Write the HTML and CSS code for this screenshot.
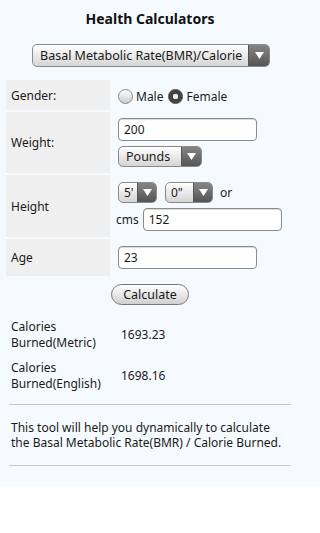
FILE: index.html
```html
<!DOCTYPE html>
<html>
<head>
<meta charset="utf-8">
<link rel="stylesheet" href="styles.css">
</head>
<body>
<div class="page">
 <div class="content">
  <h1 class="title">Health Calculators</h1>
  <div class="select select-main">
    <span class="select-text">Basal Metabolic Rate(BMR)/Calorie</span>
    <span class="select-arrow"><svg width="9" height="7" viewBox="0 0 9 7"><path d="M0 0H9L4.5 7Z" fill="#fff"/></svg></span>
  </div>

  <div class="form">
    <div class="row row-gender">
      <div class="label">Gender:</div>
      <div class="field radios">
        <span class="radio"></span><span class="radio-label">Male</span>
        <span class="radio checked"></span><span class="radio-label">Female</span>
      </div>
    </div>
    <div class="row row-weight">
      <div class="label">Weight:</div>
      <div class="field stack">
        <div class="input">200</div>
        <div class="select select-pounds">
          <span class="select-text">Pounds</span>
          <span class="select-arrow"><svg width="9" height="7" viewBox="0 0 9 7"><path d="M0 0H9L4.5 7Z" fill="#fff"/></svg></span>
        </div>
      </div>
    </div>
    <div class="row row-height">
      <div class="label">Height</div>
      <div class="field stack">
        <div class="line">
          <div class="select select-small">
            <span class="select-text">5'</span>
            <span class="select-arrow"><svg width="9" height="7" viewBox="0 0 9 7"><path d="M0 0H9L4.5 7Z" fill="#fff"/></svg></span>
          </div>
          <div class="select select-small select-in">
            <span class="select-text">0"</span>
            <span class="select-arrow"><svg width="9" height="7" viewBox="0 0 9 7"><path d="M0 0H9L4.5 7Z" fill="#fff"/></svg></span>
          </div>
          <span class="or">or</span>
        </div>
        <div class="line line-cms">
          <span class="cms">cms</span>
          <div class="input input-cms">152</div>
        </div>
      </div>
    </div>
    <div class="row row-age">
      <div class="label">Age</div>
      <div class="field">
        <div class="input">23</div>
      </div>
    </div>
  </div>

  <div class="actions"><span class="button">Calculate</span></div>

  <div class="results">
    <div class="result">
      <div class="result-label">Calories<br>Burned(Metric)</div>
      <div class="result-value">1693.23</div>
    </div>
    <div class="result">
      <div class="result-label">Calories<br>Burned(English)</div>
      <div class="result-value">1698.16</div>
    </div>
  </div>

  <hr class="rule">
  <p class="desc">This tool will help you dynamically to calculate the Basal Metabolic Rate(BMR) / Calorie Burned.</p>
  <hr class="rule">
 </div>
</div>
</body>
</html>
```

FILE: styles.css
```css
* { box-sizing: border-box; }
html, body { margin: 0; padding: 0; background: #fff; }
body {
  font-family: "Noto Sans", "DejaVu Sans", sans-serif;
  font-size: 12px;
  color: #1a1a1a;
}
.page {
  background: #f5faff;
  height: 486px;
  padding-top: 9px;
}
.content { width: 300px; }
.title {
  margin: 0;
  text-align: center;
  font-size: 14px;
  font-weight: bold;
  line-height: 19px;
  color: #111;
}
.select {
  display: flex;
  align-items: stretch;
  border: 1px solid #8a8a8a;
  border-radius: 5px;
  background: linear-gradient(#ffffff, #e6e6e6 60%, #d4d4d4);
  overflow: hidden;
}
.select-text {
  flex: 1;
  display: flex;
  align-items: center;
  padding-left: 7px;
  white-space: nowrap;
  overflow: hidden;
}
.select-arrow {
  width: 20px;
  display: flex;
  align-items: center;
  justify-content: center;
  background: linear-gradient(#858585, #555);
  border-left: 1px solid #555;
}
.select-main {
  width: 238px;
  height: 23px;
  margin: 16px 0 0 32px;
  font-size: 12.5px;
}
.select-main .select-arrow { width: 21px; }
.form {
  margin: 13px 0 0 6px;
  display: flex;
  flex-direction: column;
  gap: 2px;
}
.row {
  display: flex;
  align-items: stretch;
}
.label {
  width: 104px;
  background: #efefef;
  display: flex;
  align-items: center;
  padding-left: 5px;
}
.field {
  padding-left: 8px;
  display: flex;
  align-items: center;
}
.row-gender { height: 30px; }
.row-weight { height: 61px; }
.row-height { height: 62px; }
.row-age { height: 37px; }
.stack {
  flex-direction: column;
  align-items: flex-start;
  justify-content: center;
  gap: 5px;
}
.radios { gap: 2px; padding-top: 3px; }
.radio {
  width: 15px;
  height: 15px;
  border-radius: 50%;
  border: 1px solid #888;
  background: linear-gradient(#fff, #ccc);
}
.radio.checked {
  background: radial-gradient(circle, #eee 0 2.5px, #444 3px 100%);
  border-color: #444;
  margin-left: 3px;
}
.radio-label { margin-left: 1px; }
.input {
  width: 139px;
  height: 23px;
  border: 1px solid #8a8a8a;
  border-radius: 4px;
  background: #fff;
  display: flex;
  align-items: center;
  padding-left: 5px;
  box-shadow: inset 0 1px 1px rgba(0,0,0,0.15);
}
.select-pounds {
  width: 84px;
  height: 21px;
  font-size: 12.5px;
}
.line {
  display: flex;
  align-items: center;
}
.select-small {
  width: 39px;
  height: 21px;
}
.select-small .select-text { padding-left: 5px; }
.select-small .select-arrow { width: 19px; }
.select-in { width: 48px; margin-left: 8px; }
.or { margin-left: 7px; }
.line-cms { margin-left: -2px; }
.cms { margin-right: 4px; }
.input-cms { width: 139px; }
.actions {
  display: flex;
  margin: 8px 0 0 111px;
}
.button {
  width: 78px;
  height: 21px;
  border: 1px solid #777;
  border-radius: 11px;
  background: linear-gradient(#fff, #e4e4e4 60%, #cfcfcf);
  display: flex;
  align-items: center;
  justify-content: center;
  font-size: 12.5px;
}
.results {
  margin: 14px 0 0 11px;
  display: flex;
  flex-direction: column;
  gap: 9px;
}
.result {
  display: flex;
  align-items: center;
  line-height: 16px;
}
.result-label { width: 110px; }
.rule {
  margin: 0 9px;
  border: 0;
  border-top: 1px solid #c8c8c8;
  height: 0;
}
.results + .rule { margin-top: 12px; }
.desc {
  margin: 15px 11px 15px;
  line-height: 15px;
  font-size: 12px;
}
```
